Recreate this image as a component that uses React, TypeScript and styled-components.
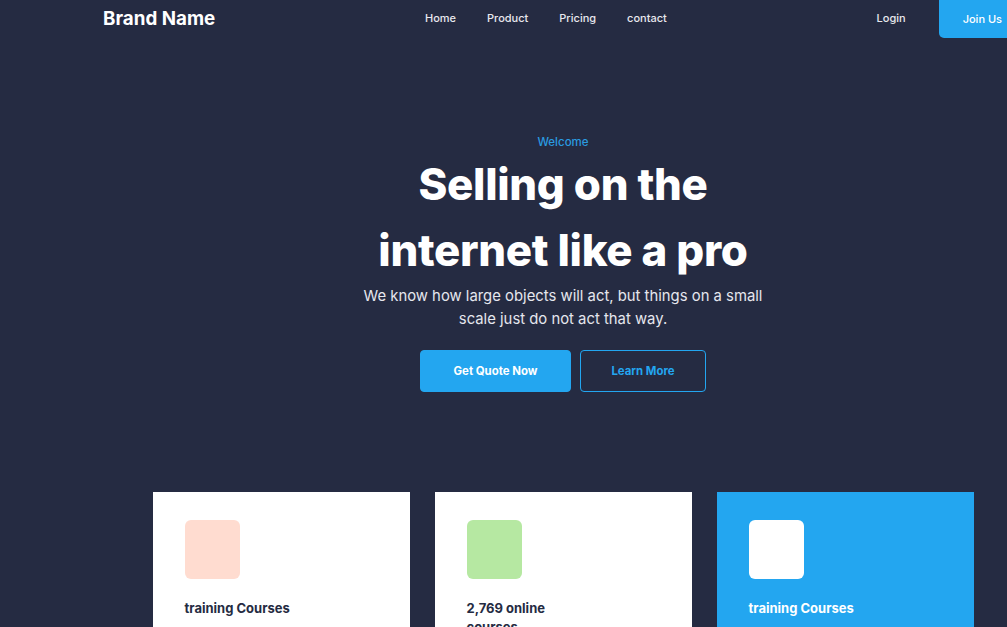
import React from "react";
import styled, { createGlobalStyle } from "styled-components";

const Global = createGlobalStyle`
  html, body {
    margin: 0;
    padding: 0;
    overflow: hidden;
    background: #252B42;
  }
  * { box-sizing: border-box; }
`;

const Page = styled.div`
  width: 1126px;
  min-height: 627px;
  background: #252B42;
  font-family: Inter, "Noto Sans", sans-serif;
  color: #ffffff;
`;

const Nav = styled.nav`
  height: 36px;
  padding: 0 100px 0 103px;
  display: flex;
  align-items: center;
  justify-content: space-between;
`;

const Brand = styled.div`
  font-size: 18.8px;
  font-weight: 700;
  color: #ffffff;
`;

const Links = styled.div`
  display: flex;
  gap: 31px;
`;

const NavLink = styled.a`
  font-size: 11px;
  font-weight: 500;
  color: #e8e8ee;
  text-decoration: none;
`;

const Right = styled.div`
  display: flex;
  align-items: center;
  gap: 33px;
  align-self: stretch;
`;

const JoinButton = styled.button`
  height: 38px;
  padding: 0 24px;
  border: none;
  border-radius: 0 0 5px 5px;
  background: #23A6F0;
  color: #ffffff;
  font-family: inherit;
  font-size: 11px;
  font-weight: 500;
  align-self: flex-start;
`;

const Hero = styled.section`
  display: flex;
  flex-direction: column;
  align-items: center;
  text-align: center;
  padding-top: 98px;
`;

const Eyebrow = styled.div`
  font-size: 11.5px;
  line-height: 16px;
  color: #2A9BE0;
  font-weight: 500;
`;

const Title = styled.h1`
  margin: 2px 0 0;
  font-size: 43.8px;
  line-height: 66px;
  font-weight: 800;
  letter-spacing: -0.3px;
  width: 440px;
`;

const Lead = styled.p`
  margin: 1px 0 0;
  width: 420px;
  font-size: 14.85px;
  line-height: 23px;
  color: #e6e7ee;
`;

const Buttons = styled.div`
  display: flex;
  gap: 9px;
  margin-top: 19px;
`;

const CTA = styled.button<{ $outline?: boolean; $w: number }>`
  width: ${(p) => p.$w}px;
  height: 42px;
  border-radius: 4px;
  font-family: inherit;
  font-size: 11.4px;
  font-weight: 700;
  cursor: pointer;
  background: ${(p) => (p.$outline ? "transparent" : "#23A6F0")};
  color: ${(p) => (p.$outline ? "#23A6F0" : "#ffffff")};
  border: 1px solid #23A6F0;
`;

const Cards = styled.div`
  display: grid;
  grid-template-columns: repeat(3, 257px);
  gap: 25px;
  justify-content: center;
  margin-top: 100px;
`;

const Card = styled.div<{ $blue?: boolean }>`
  height: 250px;
  padding: 28px 32px;
  background: ${(p) => (p.$blue ? "#23A6F0" : "#ffffff")};
  display: flex;
  flex-direction: column;
  align-items: flex-start;
`;

const IconBox = styled.div<{ $color: string }>`
  width: 55px;
  height: 59px;
  border-radius: 6px;
  background: ${(p) => p.$color};
`;

const CardTitle = styled.div<{ $light?: boolean }>`
  margin-top: 20px;
  max-width: 115px;
  font-size: 13px;
  line-height: 19px;
  font-weight: 700;
  color: ${(p) => (p.$light ? "#ffffff" : "#252B42")};
`;

export default function App() {
  return (
    <Page>
      <Global />
      <Nav>
        <Brand>Brand Name</Brand>
        <Links>
          <NavLink href="#">Home</NavLink>
          <NavLink href="#">Product</NavLink>
          <NavLink href="#">Pricing</NavLink>
          <NavLink href="#">contact</NavLink>
        </Links>
        <Right>
          <NavLink href="#">Login</NavLink>
          <JoinButton>Join Us</JoinButton>
        </Right>
      </Nav>
      <Hero>
        <Eyebrow>Welcome</Eyebrow>
        <Title>Selling on the internet like a pro</Title>
        <Lead>
          We know how large objects will act, but things on a small scale just do not act that way.
        </Lead>
        <Buttons>
          <CTA $w={151}>Get Quote Now</CTA>
          <CTA $w={126} $outline>
            Learn More
          </CTA>
        </Buttons>
      </Hero>
      <Cards>
        <Card>
          <IconBox $color="#FFDCD0" />
          <CardTitle>training Courses</CardTitle>
        </Card>
        <Card>
          <IconBox $color="#B6E8A2" />
          <CardTitle>2,769 online courses</CardTitle>
        </Card>
        <Card $blue>
          <IconBox $color="#ffffff" />
          <CardTitle $light>training Courses</CardTitle>
        </Card>
      </Cards>
    </Page>
  );
}
